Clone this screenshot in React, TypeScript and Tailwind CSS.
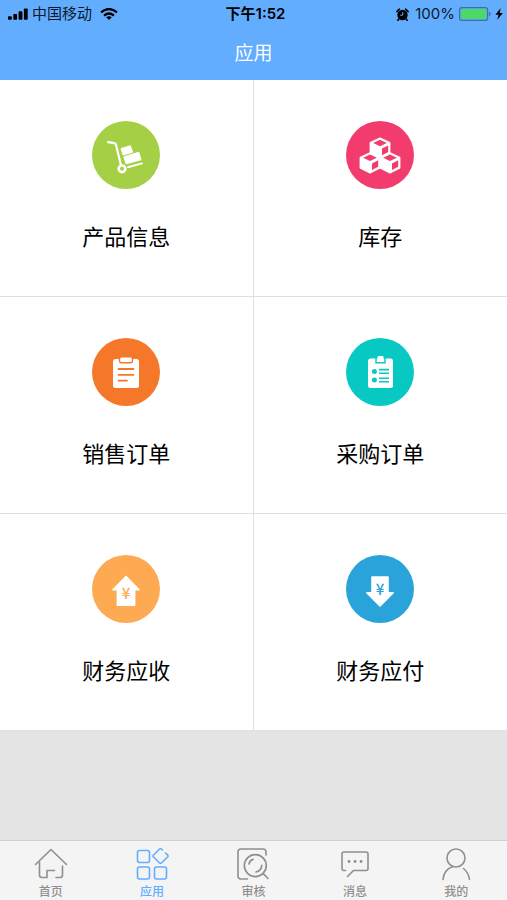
import React, { useState } from 'react';

interface AppItem {
  id: string;
  label: string;
  color: string;
  icon: React.ReactNode;
}

interface TabItem {
  id: string;
  label: string;
  icon: React.ReactNode;
}

// One cube, its top corner at (x, y)
const Cube: React.FC<{ x: number; y: number }> = ({ x, y }) => (
  <g transform={`translate(${x} ${y})`}>
    <path d="M0 0L10 4.6V15.6L0 20.6L-10 15.6V4.6Z" fill="#fff" stroke="#fff" strokeWidth="0.8" strokeLinejoin="round" />
    <path d="M0 2L6.8 5.1L0 8.4L-6.8 5.1Z" fill="#f23c6d" />
    <path d="M2 10.8L8.2 7.7V14.2L2 17.4Z" fill="#f23c6d" />
  </g>
);

const apps: AppItem[] = [
  {
    id: 'products',
    label: '产品信息',
    color: 'bg-[#a5d045]',
    icon: (
      <>
        <path d="M16 21.2L22.2 22.2Q23.6 22.5 24 24L28.8 43.5" fill="none" stroke="#fff" strokeWidth="2.2" strokeLinecap="round" />
        <circle cx="30" cy="47.8" r="3.3" fill="none" stroke="#fff" strokeWidth="2.6" />
        <path d="M36 46.3L50 42.4" stroke="#fff" strokeWidth="2" strokeLinecap="round" />
        <path d="M29 27.6L38.4 24.8L40.6 31.2L31 34Z" fill="#fff" stroke="#fff" strokeLinejoin="round" />
        <path d="M31.8 35.8L46.8 31.2L49 38.8L34 42.8Z" fill="#fff" stroke="#fff" strokeLinejoin="round" />
      </>
    ),
  },
  {
    id: 'stock',
    label: '库存',
    color: 'bg-[#f23c6d]',
    icon: (
      <>
        <Cube x={34} y={16.8} />
        <Cube x={24} y={31.6} />
        <Cube x={44} y={31.6} />
      </>
    ),
  },
  {
    id: 'sales',
    label: '销售订单',
    color: 'bg-[#f5772a]',
    icon: (
      <>
        <rect x="21" y="21" width="26" height="29" rx="2.5" fill="#fff" />
        <rect x="27.5" y="18.8" width="13" height="6" rx="2" fill="#fff" stroke="#f5772a" strokeWidth="1.4" />
        <path d="M26.5 31H41.5M26.5 36.8H41.5M26.5 42.6H35" stroke="#f5772a" strokeWidth="1.8" strokeLinecap="round" />
      </>
    ),
  },
  {
    id: 'purchase',
    label: '采购订单',
    color: 'bg-[#08c8c4]',
    icon: (
      <>
        <rect x="22" y="20.5" width="25" height="29.5" rx="2.5" fill="#fff" />
        <path d="M30 20V24.8H39V20" fill="none" stroke="#08c8c4" strokeWidth="1.4" />
        <rect x="31.5" y="18" width="6" height="6" rx="1" fill="#fff" />
        <circle cx="28.4" cy="33.4" r="2.5" fill="#08c8c4" />
        <circle cx="28.4" cy="42" r="2.5" fill="#08c8c4" />
        <path d="M33 31.6H43M33 35.2H43M33 40.2H43M33 43.8H43" stroke="#08c8c4" strokeWidth="1.6" />
      </>
    ),
  },
  {
    id: 'receivable',
    label: '财务应收',
    color: 'bg-[#fdaa52]',
    icon: (
      <>
        <path d="M34 21.5L47 34.8H42.6V50.2H25.4V34.8H21Z" fill="#fff" stroke="#fff" strokeWidth="1.6" strokeLinejoin="round" />
        <text x="34" y="44" fontSize="15" fontWeight="500" fontFamily="'Noto Sans CJK SC', sans-serif" textAnchor="middle" fill="#fdaa52">¥</text>
      </>
    ),
  },
  {
    id: 'payable',
    label: '财务应付',
    color: 'bg-[#2aa3da]',
    icon: (
      <>
        <path d="M34 51L20.8 37.8H26V22H42V37.8H47.2Z" fill="#fff" stroke="#fff" strokeWidth="1.6" strokeLinejoin="round" />
        <text x="34" y="40" fontSize="15" fontWeight="500" fontFamily="'Noto Sans CJK SC', sans-serif" textAnchor="middle" fill="#2aa3da">¥</text>
      </>
    ),
  },
];

const tabs: TabItem[] = [
  {
    id: 'home',
    label: '首页',
    icon: (
      <>
        <path d="M2.5 17.5L18 2.5L33.5 17.5" />
        <path d="M6.5 15V28Q6.5 30.5 9 30.5H14V23.5H21.5M23 30.5H27Q29.5 30.5 29.5 28V19" />
      </>
    ),
  },
  {
    id: 'apps',
    label: '应用',
    icon: (
      <>
        <rect x="3.5" y="3.5" width="12" height="12" rx="2" />
        <rect x="3.5" y="20" width="12" height="12" rx="2" />
        <rect x="20.5" y="20" width="12" height="12" rx="2" />
        <path d="M28.5 3L27.4 2Q26.5 1.2 25.6 2L19.3 8.2Q18.5 9 19.3 9.8L25.6 16Q26.5 16.8 27.4 16L33.8 9.8Q34.4 9 33.8 8.2L31.5 6" />
      </>
    ),
  },
  {
    id: 'review',
    label: '审核',
    icon: (
      <>
        <path d="M12.5 32H6Q3 32 3 29V5Q3 2 6 2H28Q31 2 31 5V8" />
        <circle cx="20.3" cy="18.6" r="11" />
        <path d="M28.3 26.6L33 31.5M14 17Q14.8 13.2 18 12.4M26.8 18.4Q26.5 23.8 21 25" />
      </>
    ),
  },
  {
    id: 'messages',
    label: '消息',
    icon: (
      <>
        <path d="M8.5 23.5H7Q5 23.5 5 21.5V7Q5 5 7 5H29Q31 5 31 7V21.5Q31 23.5 29 23.5H16.5L10.5 29.5" />
        <path d="M12 14.5H12.1M18 14.5H18.1M24 14.5H24.1" strokeWidth="2.8" />
      </>
    ),
  },
  {
    id: 'profile',
    label: '我的',
    icon: (
      <>
        <circle cx="18" cy="11" r="9" />
        <path d="M5 32.5Q6 22.5 15 19.5M25.5 21.5Q30.5 25.5 31.5 32.5" />
      </>
    ),
  },
];

const StatusBar: React.FC = () => (
  <div className="grid h-7 grid-cols-3 items-center text-[15px] text-[#0b1a2b]">
    <div className="flex items-center gap-1 pl-2">
      <svg className="h-3 w-5" viewBox="0 0 20 12" fill="#000">
        <rect x="0" y="8.2" width="3.8" height="3.6" rx="0.8" />
        <rect x="5.3" y="6" width="3.8" height="5.8" rx="0.8" />
        <rect x="10.6" y="3.2" width="3.8" height="8.6" rx="0.8" />
        <rect x="15.9" y="0.4" width="3.8" height="11.4" rx="0.8" />
      </svg>
      <span>中国移动</span>
      <svg className="ml-1 h-3 w-[18px]" viewBox="0 0 18 12" fill="none" stroke="#000" strokeWidth="2.2">
        <path d="M1 4.4Q9 -2.4 17 4.4" />
        <path d="M4 7.6Q9 3.4 14 7.6" />
        <path d="M9 12L6.2 9.3Q9 7.4 11.8 9.3Z" fill="#000" stroke="none" />
      </svg>
    </div>
    <span className="pl-1 text-center font-semibold text-black">下午1:52</span>
    <div className="flex items-center justify-end pr-1">
      <svg className="mr-1.5 h-[13px] w-[13px]" viewBox="0 0 13 13">
        <circle cx="6.5" cy="7" r="5.2" fill="#000" />
        <path d="M0.9 3.6L3.4 1.2M12.1 3.6L9.6 1.2M2.8 11L1.8 12.4M10.2 11L11.2 12.4" stroke="#000" strokeWidth="1.6" strokeLinecap="round" />
        <path d="M6.8 4V7.2H4.2" fill="none" stroke="#63adff" strokeWidth="1" />
      </svg>
      <span>100%</span>
      <svg className="ml-1 h-[14px] w-8" viewBox="0 0 32 14">
        <rect x="0.6" y="0.6" width="28" height="12.8" rx="2.4" fill="none" stroke="#3d6ea8" strokeWidth="1.2" />
        <rect x="2" y="2" width="25.2" height="10" rx="1.2" fill="#4cd964" />
        <path d="M30 4.8Q31.6 5.4 31.6 7Q31.6 8.6 30 9.2Z" fill="#3d6ea8" />
      </svg>
      <svg className="ml-1 h-3 w-2" viewBox="0 0 8 12" fill="#000">
        <path d="M5.8 0L0.4 6.8H3.6L2.2 12L7.8 5H4.6Z" />
      </svg>
    </div>
  </div>
);

const App: React.FC = () => {
  const [activeTab, setActiveTab] = useState('apps');

  return (
    <div className="flex min-h-screen flex-col bg-[#e4e4e4] font-[Inter,'Noto_Sans_CJK_SC',sans-serif]">
      <header className="bg-[#63adff]">
        <StatusBar />
        <h1 className="h-[52px] text-center text-[19px] leading-[52px] text-white">应用</h1>
      </header>

      <main className="flex-1">
        <div className="grid grid-cols-2">
          {apps.map((app) => (
            <button
              key={app.id}
              className="flex flex-col items-center border-b border-[#e0e0e0] bg-white pt-[41px] pb-[43px] odd:border-r"
            >
              <span className={`h-[68px] w-[68px] rounded-full ${app.color}`}>
                <svg viewBox="0 0 68 68" aria-hidden="true">{app.icon}</svg>
              </span>
              <span className="mt-8 text-[22px] leading-8 text-black">{app.label}</span>
            </button>
          ))}
        </div>
      </main>

      <nav className="grid h-[60px] grid-cols-5 border-t border-[#cfcfcf] bg-[#f4f4f4]">
        {tabs.map((tab) => (
          <button
            key={tab.id}
            onClick={() => setActiveTab(tab.id)}
            className={`flex flex-col items-center pt-1.5 ${
              activeTab === tab.id ? 'text-[#63adff]' : 'text-[#8f8f8f]'
            }`}
          >
            <svg
              className="h-[34px] w-9"
              viewBox="0 0 36 34"
              fill="none"
              stroke="currentColor"
              strokeWidth="1.6"
              strokeLinecap="round"
              strokeLinejoin="round"
              aria-hidden="true"
            >
              {tab.icon}
            </svg>
            <span className="mt-[3px] text-xs font-medium">{tab.label}</span>
          </button>
        ))}
      </nav>
    </div>
  );
};

export default App;
